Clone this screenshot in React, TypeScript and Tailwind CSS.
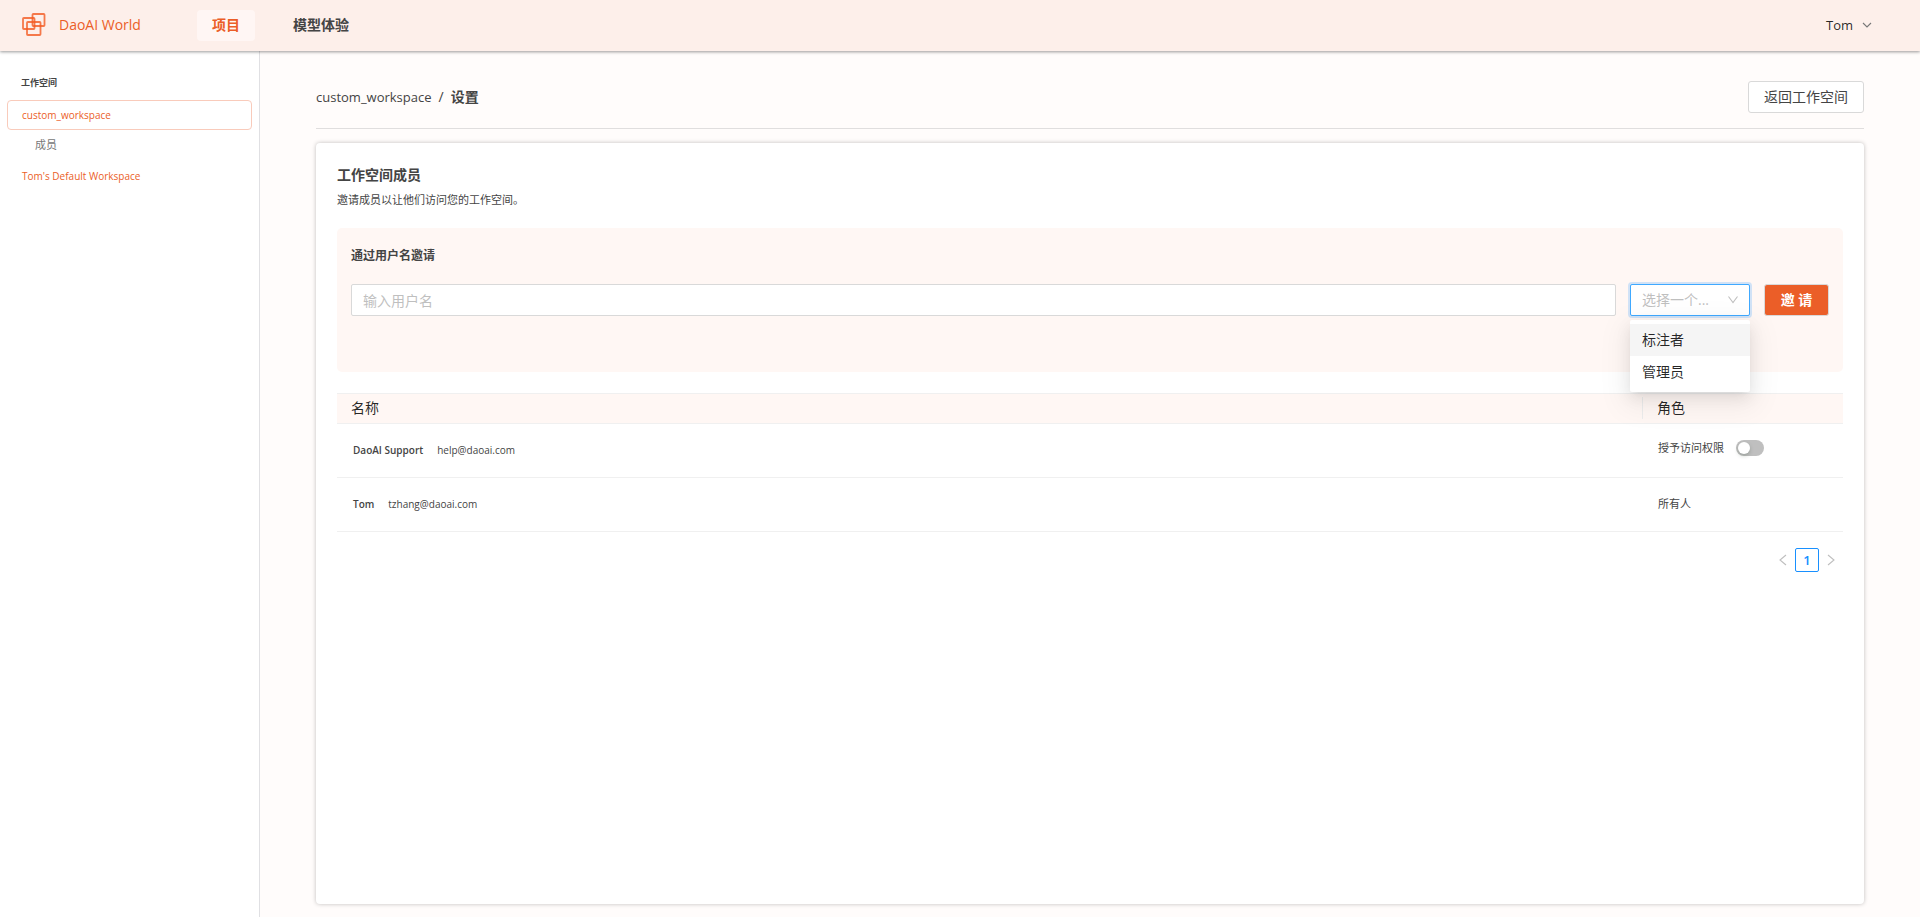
import React, { useState } from 'react';

const roles = [
  { value: 'annotator', label: '标注者' },
  { value: 'admin', label: '管理员' },
];

const Logo = () => (
  <svg width="24" height="24" viewBox="0 0 24 24" fill="none" stroke="#f25a22" strokeWidth="1.8" strokeOpacity="0.8">
    <rect x="10.5" y="1" width="12" height="12" rx="0.8" />
    <rect x="1" y="5" width="11.5" height="11" rx="0.8" />
    <rect x="5" y="9" width="13.5" height="13" rx="0.8" />
  </svg>
);

interface ChevronProps {
  d: string;
  className: string;
}

const Chevron: React.FC<ChevronProps> = ({ d, className }) => (
  <svg className={className} viewBox="0 0 12 12" fill="none" stroke="currentColor" strokeWidth="1.1" aria-hidden="true">
    <path d={d} />
  </svg>
);

const Header = () => (
  <header className="relative z-20 flex h-[51px] shrink-0 items-center bg-[#fdefea] px-[22px] pb-px text-sm shadow-[0_1px_3px_rgba(0,0,0,0.4)]">
    <a href="#home" className="flex items-center gap-[13px] font-medium text-[#eb5e28]">
      <Logo />
      DaoAI World
    </a>
    <nav className="ml-14 flex items-center gap-[23px] font-semibold">
      <a href="#projects" className="flex h-[31px] items-center rounded bg-[#fff6f4] px-[15px] text-[#eb5e28]">
        项目
      </a>
      <a href="#models" className="px-[15px] text-[#444]">
        模型体验
      </a>
    </nav>
    <button type="button" className="mr-[25px] ml-auto flex items-center gap-2 text-[13px] text-black/85">
      Tom
      <Chevron d="M2 4l4 4 4-4" className="h-3 w-3 text-[#777]" />
    </button>
  </header>
);

const Sidebar = () => (
  <aside className="w-[260px] shrink-0 border-r border-[#e0e0e3] bg-white px-[7px] pt-6 text-[10px]">
    <h2 className="px-[14px] text-[9px] leading-4 font-bold text-[#444]">工作空间</h2>
    <nav className="mt-[9px] flex flex-col text-[#eb5e28]">
      <a href="#custom" className="flex h-[30px] items-center rounded border border-[#f9cbbb] px-[14px] font-medium">
        custom_workspace
      </a>
      <a href="#members" className="flex h-[30px] items-center px-7 text-[11px] text-[#777]">
        成员
      </a>
      <a href="#default" className="flex h-8 items-center px-[15px] font-medium">
        Tom's Default Workspace
      </a>
    </nav>
  </aside>
);

const InviteForm = () => {
  const [username, setUsername] = useState('');
  const [role, setRole] = useState('');
  const [open, setOpen] = useState(true);

  const pickRole = (value: string) => {
    setRole(value);
    setOpen(false);
  };

  return (
    <form
      className="mt-5 h-36 rounded-[5px] bg-[#fff7f4] px-[14px] pt-[19px]"
      onSubmit={(e) => e.preventDefault()}
    >
      <label htmlFor="username" className="block text-xs leading-[18px] font-semibold text-[#444]">
        通过用户名邀请
      </label>
      <div className="mt-[19px] flex items-center text-sm">
        <input
          id="username"
          type="text"
          value={username}
          onChange={(e) => setUsername(e.target.value)}
          placeholder="输入用户名"
          className="h-8 min-w-0 flex-1 rounded-xs border border-[#d9d9d9] bg-white px-[11px] outline-none placeholder:text-[#bfbfbf]"
        />
        <div className="relative ml-[14px] w-[120px]">
          <select
            aria-label="角色"
            value={role}
            onChange={(e) => pickRole(e.target.value)}
            onClick={() => setOpen(!open)}
            className="block h-8 w-full appearance-none rounded-xs border border-[#40a9ff] bg-white pr-7 pl-[11px] text-[#bfbfbf] shadow-[0_0_0_2px_rgba(24,144,255,0.2)] outline-none"
          >
            <option value="">选择一个...</option>
            {roles.map((r) => (
              <option key={r.value} value={r.value}>
                {r.label}
              </option>
            ))}
          </select>
          <Chevron
            d="M1.500 2.500L6 8.500l4.500-6"
            className="pointer-events-none absolute top-[10px] right-[11px] h-3 w-3 text-[#bfbfbf]"
          />
          {open && (
            <div className="absolute top-9 left-0 z-10 w-full rounded-xs bg-white py-1 shadow-[0_3px_6px_-4px_rgba(0,0,0,0.12),0_6px_16px_0_rgba(0,0,0,0.08),0_9px_28px_8px_rgba(0,0,0,0.05)]">
              {roles.map((r) => (
                <button
                  key={r.value}
                  type="button"
                  onClick={() => pickRole(r.value)}
                  className="block h-8 w-full px-3 text-left text-black/85 first:bg-[#f5f5f5]"
                >
                  {r.label}
                </button>
              ))}
            </div>
          )}
        </div>
        <button
          type="submit"
          className="ml-[14px] h-8 w-[65px] rounded-[3px] border border-[#d9d9d9] bg-[#eb5e28] font-semibold text-white"
        >
          邀 请
        </button>
      </div>
    </form>
  );
};

const MembersTable = () => (
  <table className="mt-[21px] w-full table-fixed border-collapse text-left text-[10px] text-[#444]">
    <thead>
      <tr className="h-[30px] border-y border-[#f0f0f0] bg-[#fff7f4] text-sm text-black/85">
        <th className="px-[14px] pb-0.5 font-normal">名称</th>
        <th className="w-[201px] p-0 pb-0.5 font-normal">
          <div className="border-l border-[#ececec] px-[14px] leading-[22px]">角色</div>
        </th>
      </tr>
    </thead>
    <tbody>
      <tr className="h-[54px] border-b border-[#f0f0f0]">
        <td className="px-4">
          <span className="font-semibold">DaoAI Support</span>
          <span className="ml-[14px]">help@daoai.com</span>
        </td>
        <td className="px-4 pb-[5px] text-[11px]">
          <label className="flex items-center gap-3">
            授予访问权限
            <input
              type="checkbox"
              role="switch"
              className="h-4 w-7 appearance-none rounded-full bg-[#bfbfbf] p-0.5 before:block before:h-3 before:w-3 before:rounded-full before:bg-white before:shadow-[0_2px_4px_rgba(0,35,11,0.2)] checked:bg-[#1890ff] checked:before:ml-3"
            />
          </label>
        </td>
      </tr>
      <tr className="h-[54px] border-b border-[#f0f0f0]">
        <td className="px-4">
          <span className="font-semibold">Tom</span>
          <span className="ml-[14px]">tzhang@daoai.com</span>
        </td>
        <td className="px-4 text-[11px]">所有人</td>
      </tr>
    </tbody>
  </table>
);

const Pagination = () => (
  <nav aria-label="pagination" className="mt-4 flex h-6 items-center justify-end text-[13px] text-[#bfbfbf]">
    <button type="button" disabled aria-label="上一页" className="flex h-6 w-6 items-center justify-center">
      <Chevron d="M9 1L3 6l6 5" className="h-3 w-3" />
    </button>
    <button
      type="button"
      className="h-6 w-6 rounded-xs border border-[#1890ff] bg-white leading-5 font-semibold text-[#1890ff]"
    >
      1
    </button>
    <button type="button" disabled aria-label="下一页" className="flex h-6 w-6 items-center justify-center">
      <Chevron d="M3 1l6 5-6 5" className="h-3 w-3" />
    </button>
  </nav>
);

export default function App() {
  return (
    <div className="flex min-h-screen flex-col bg-[#fffcfb] font-['Open_Sans','Noto_Sans_CJK_SC',sans-serif]">
      <Header />
      <div className="flex flex-1">
        <Sidebar />
        <main className="flex min-w-0 flex-1 flex-col px-14 pt-[30px] pb-[13px]">
          <div className="flex items-start justify-between border-b border-[#e0dede] pb-[15px] text-sm text-[#444]">
            <div className="flex h-8 items-center gap-[7px]">
              <a href="#custom" className="text-[13px]">
                custom_workspace
              </a>
              <span>/</span>
              <span className="font-semibold">设置</span>
            </div>
            <button type="button" className="h-8 rounded-[3px] border border-[#d9d9d9] bg-white px-[15px]">
              返回工作空间
            </button>
          </div>
          <section className="mt-[14px] flex-1 rounded bg-white px-[21px] pt-[21px] shadow-[0_0_4px_rgba(0,0,0,0.25)]">
            <h1 className="text-sm leading-[22px] font-semibold text-[#444]">工作空间成员</h1>
            <p className="mt-1.5 text-[11px] leading-4 text-[#444]">邀请成员以让他们访问您的工作空间。</p>
            <InviteForm />
            <MembersTable />
            <Pagination />
          </section>
        </main>
      </div>
    </div>
  );
}
